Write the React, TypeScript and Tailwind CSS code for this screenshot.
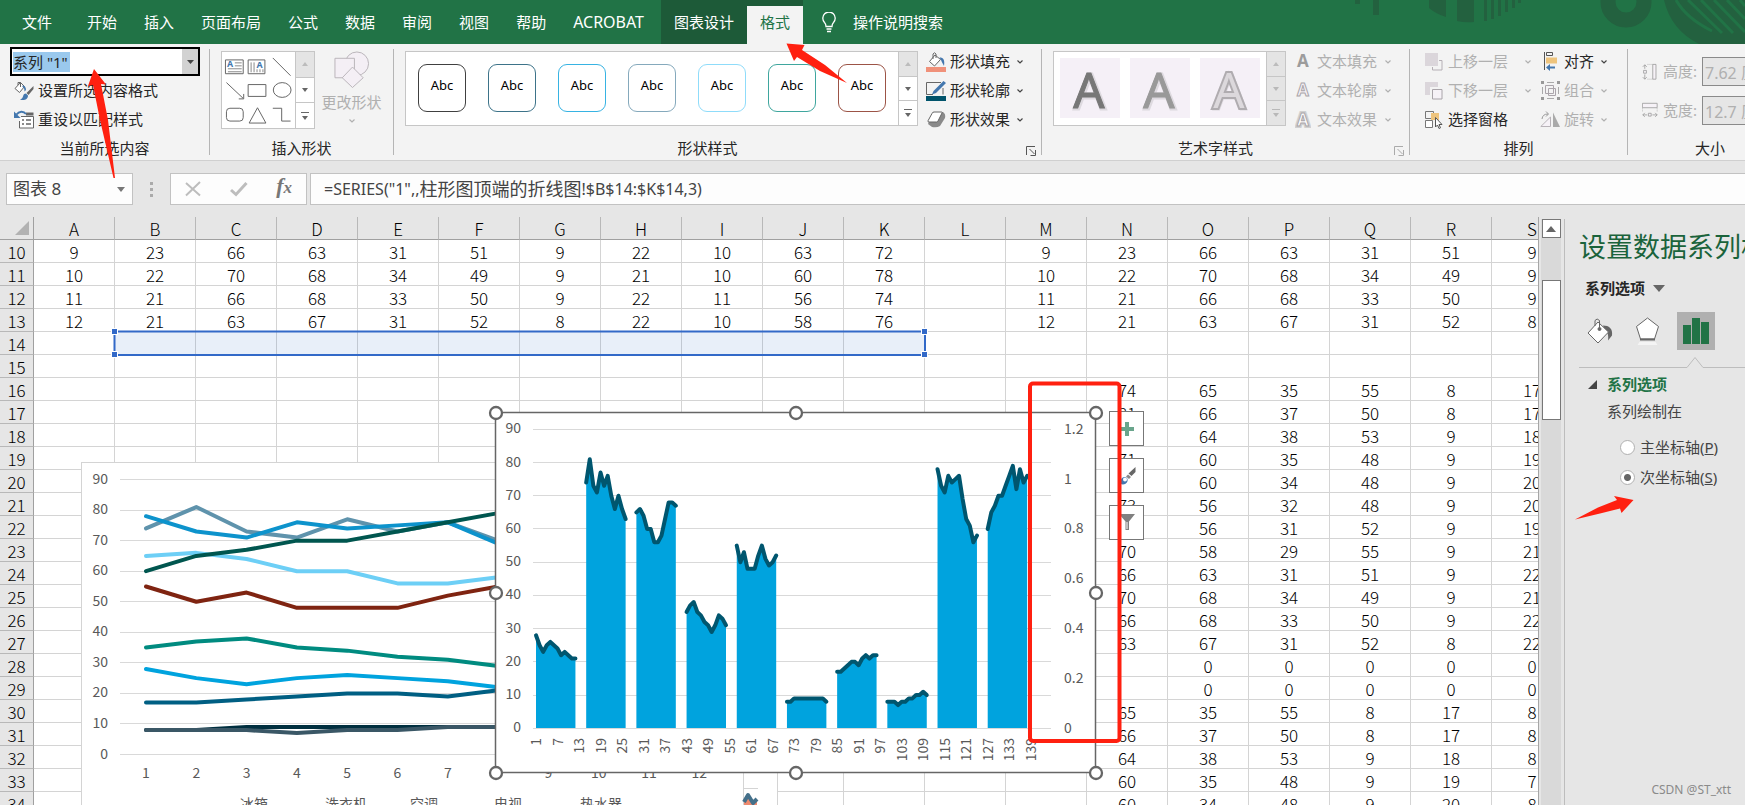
import * as React from "react";

/* ================= UTIL ================= */
function cn(...classes: Array<string | false | null | undefined>) {
  return classes.filter(Boolean).join(" ");
}

/* ================= TOKENS UI ================= */
const UI_FONT = "font-['Noto_Sans','Noto_Sans_CJK_SC',sans-serif]";
const CELL_FONT = "font-['Noto_Sans_CJK_SC',sans-serif]";
const CHART_FONT = "'Noto Sans CJK SC', sans-serif";
const RED = "#ff2010";

/* ================= DATA ================= */
const TABS = ["文件", "开始", "插入", "页面布局", "公式", "数据", "审阅", "视图", "帮助", "ACROBAT"];
const COLS = "ABCDEFGHIJKLMNOPQRS".split("");

const ROWS: Record<number, string> = {
  10: "9,23,66,63,31,51,9,22,10,63,72,,9,23,66,63,31,51,9",
  11: "10,22,70,68,34,49,9,21,10,60,78,,10,22,70,68,34,49,9",
  12: "11,21,66,68,33,50,9,22,11,56,74,,11,21,66,68,33,50,9",
  13: "12,21,63,67,31,52,8,22,10,58,76,,12,21,63,67,31,52,8",
};

// columns N to S, rows 16 to 34
const RIGHT_BLOCK = [
  "74,65,35,55,8,17",
  "81,66,37,50,8,17",
  "73,64,38,53,9,18",
  "71,60,35,48,9,19",
  "77,60,34,48,9,20",
  "73,56,32,48,9,20",
  "76,56,31,52,9,19",
  "70,58,29,55,9,21",
  "66,63,31,51,9,22",
  "70,68,34,49,9,21",
  "66,68,33,50,9,22",
  "63,67,31,52,8,22",
  ",0,0,0,0,0",
  ",0,0,0,0,0",
  "65,35,55,8,17,8",
  "66,37,50,8,17,8",
  "64,38,53,9,18,8",
  "60,35,48,9,19,7",
  "60,34,48,9,20,8",
];

RIGHT_BLOCK.forEach((line, i) => {
  ROWS[16 + i] = ",".repeat(13) + line;
});

const ROW_NUMBERS = Array.from({ length: 25 }, (_, i) => i + 10);

const SERIES = [
  [28, 25, 23, 25, 26, 25, 24, 22, 23, 22, 21, 21],
  [74, 81, 73, 71, 77, 73, 76, 70, 66, 70, 66, 63],
  [65, 66, 64, 60, 60, 56, 56, 58, 63, 68, 68, 67],
  [35, 37, 38, 35, 34, 32, 31, 29, 31, 34, 33, 31],
  [55, 50, 53, 48, 48, 48, 52, 55, 51, 49, 50, 52],
  [8, 8, 9, 9, 9, 9, 9, 9, 9, 9, 9, 8],
  [17, 17, 18, 19, 20, 20, 19, 21, 22, 21, 22, 22],
  [8, 8, 8, 7, 8, 8, 9, 9, 10, 10, 11, 10],
  [78, 73, 71, 76, 74, 75, 76, 69, 63, 61, 56, 58],
  [60, 65, 67, 70, 70, 73, 76, 79, 72, 78, 74, 76],
];

const LINE_COLORS = [
  "#00a3de", "#5f93ac", "#6dcff6", "#008b80", "#7f2411",
  "#002f3f", "#005f83", "#3a5766", "#0d93cc", "#00564f",
];

const SHAPE_STYLES = [
  "border-[#404040]", "border-[#3d7389]", "border-[#37b3e3]", "border-[#85a9bc]",
  "border-[#8fdcfa]", "border-[#3fa69e]", "border-[#9c5446]",
];

/* ================= SMALL PARTS ================= */
function Chevron({ dim }: { dim?: boolean }) {
  return (
    <svg width="8" height="6" viewBox="0 0 8 6" fill="none" stroke={dim ? "#b0b0b0" : "#444"} strokeWidth="1.2">
      <path d="M1.5 1.5 4 4l2.5-2.5" />
    </svg>
  );
}

function Group({ label, className, launcher, children }: {
  label: string;
  className?: string;
  launcher?: "on" | "off";
  children: React.ReactNode;
}) {
  return (
    <section className={cn("relative flex shrink-0 flex-col", className)}>
      <div className="flex-1">{children}</div>
      <p className={cn("h-6 text-center leading-6", launcher && "pr-5")}>{label}</p>
      {launcher && (
        <button aria-label={label} className="absolute bottom-1 right-1">
          <svg width="11" height="10" viewBox="0 0 11 10" fill="none" stroke={launcher === "on" ? "#555" : "#aaa"}>
            <path d="M.5 9V.5H9M3.500 3l5 5M9.500 4v5.500H4.500" />
          </svg>
        </button>
      )}
    </section>
  );
}

function Separator() {
  return <div className="my-[5px] w-px shrink-0 bg-[#b5b5b5]" />;
}

function GalleryScroll({ dim }: { dim?: boolean }) {
  const on = dim ? "#b8b8b8" : "#666";
  return (
    <div className="flex w-[19px] flex-col border-l border-[#c6c6c6]">
      <button aria-label="向上" className="grid flex-1 place-items-center border-b border-[#c6c6c6] bg-[#e4e4e4]">
        <svg width="6" height="4"><path d="M0 4 3 0l3 4z" fill="#bcbcbc" /></svg>
      </button>
      <button aria-label="向下" className={cn("grid flex-1 place-items-center border-b border-[#c6c6c6]", dim && "bg-[#e4e4e4]")}>
        <svg width="6" height="4"><path d="M0 0h6L3 4z" fill={on} /></svg>
      </button>
      <button aria-label="其他" className={cn("grid flex-1 place-items-center", dim && "bg-[#e4e4e4]")}>
        <svg width="8" height="8"><path d="M0 0h8v1H0zM1 4h6L4 8z" fill={on} /></svg>
      </button>
    </div>
  );
}

function Tool({ icon, label, dim, menu, className }: {
  icon: React.ReactNode;
  label: string;
  dim?: boolean;
  menu?: boolean;
  className?: string;
}) {
  return (
    <button className={cn("flex h-[29px] items-center gap-1 whitespace-nowrap", dim && "text-[#b0b0b0]", className)}>
      <span className="grid w-5 place-items-center">{icon}</span>
      <span>{label}</span>
      {menu && <span className="ml-auto"><Chevron dim={dim} /></span>}
    </button>
  );
}

/* ================= ICONS ================= */
const FormatIcon = () => (
  <svg width="20" height="20" viewBox="0 0 20 20" fill="none">
    <path d="M6.500 1.500 1 7.500l4.500 4 5-6z" fill="#fff" stroke="#666" />
    <path d="M4 4V1.500h2.500V6" stroke="#666" />
    <path d="M8.500 4.500c2 0 3.500 1.500 3.500 4.500l-1.500 1.500C10.500 8 10 6.500 8.500 6z" fill="#4377ae" />
    <path d="m19.500 5-7 7 2 2 5-6z" fill="#666" />
    <path d="M12 12.500c-2 0-2.500 1-3 3-.4 1.500-1.500 2.500-3 3 3.500 1.300 8 .5 8-4z" fill="#4377ae" />
  </svg>
);

const ResetIcon = () => (
  <svg width="20" height="19" viewBox="0 0 20 19" fill="none">
    <path d="M7 6.500h12.500v11.500h-14v-7" fill="#fff" stroke="#666" />
    <path d="M12 2.500h7.500v3H12z" fill="#666" />
    <path d="M8 10h2M8 14h2M12 10h5M12 14h5" stroke="#666" strokeWidth="1.500" />
    <path d="M12 4C9.500.8 5 1 2.500 4.500" stroke="#4377ae" strokeWidth="2" />
    <path d="M0 1.500V8h6.500z" fill="#4377ae" />
  </svg>
);

const ShapeFillIcon = () => (
  <svg width="20" height="20" viewBox="0 0 20 20" fill="none">
    <path d="M9 3 3.500 9.500l5 4.500 6-6.500z" fill="#fff" stroke="#666" />
    <path d="M7 7V2q1.500-2.500 3 0v4" stroke="#666" />
    <path d="M13.500 5.500c4 0 5.500 2.500 4.500 8.500-1-2-2-3.500-3-6z" fill="#4377ae" />
    <path d="M0 15h20v5H0z" fill="#f0917a" />
  </svg>
);

const ShapeOutlineIcon = () => (
  <svg width="20" height="20" viewBox="0 0 20 20" fill="none">
    <path d="M15 1.500H.5v12H7M17 7v6.500" stroke="#666" />
    <path d="M17.500 0 20 2 10 12l-4 1.500L7.500 10z" fill="#4377ae" />
    <path d="M0 15h20v5H0z" fill="#00536b" />
  </svg>
);

const ShapeEffectIcon = () => (
  <svg width="19" height="17" viewBox="0 0 19 17">
    <path d="M6 1h10q3 2 2 6l-5 8q-3 2-8 1l-4-3z" fill="#8a8a8a" />
    <path d="M7 1h7.500q1 0 .5 1l-4 8q-.5 1-1.500 1H2q-1.500 0-1-1.200l4-7.300Q5.500 1 7 1z" fill="#fff" stroke="#666" />
  </svg>
);

function LetterIcon({ kind }: { kind: "fill" | "outline" | "glow" }) {
  return (
    <svg width="16" height="18" viewBox="0 0 16 18" fontFamily="'Noto Sans', sans-serif" fontWeight="bold" fontSize="17">
      {kind === "fill" && <text x="8" y="14" textAnchor="middle" fill="#9c9c9c">A</text>}
      {kind === "outline" && <text x="8" y="14" textAnchor="middle" fill="#f6f2f7" stroke="#aaa6aa">A</text>}
      {kind === "glow" && (
        <>
          <text x="8" y="15" textAnchor="middle" fill="none" stroke="#d0d0d0" strokeWidth="4">A</text>
          <text x="8" y="15" textAnchor="middle" fill="#fff" stroke="#aaa6aa">A</text>
        </>
      )}
    </svg>
  );
}

const ForwardIcon = () => (
  <svg width="18" height="18" viewBox="0 0 18 18" fill="none" stroke="#b5afb5">
    <path d="M0 0h13v13H0z" fill="#dbd6db" stroke="none" />
    <path d="M14 7.500h3v9.500H7.500V14" />
  </svg>
);

const BackwardIcon = () => (
  <svg width="18" height="18" viewBox="0 0 18 18" fill="none">
    <path d="M0 0h13v13H0z" fill="#dbd6db" />
    <path d="M6.500 6.500h11v11h-11z" fill="#f6f2f7" stroke="#f3f3f3" strokeWidth="3" />
    <path d="M7.500 7.500h9.500v9.500H7.500z" fill="#f6f2f7" stroke="#a9a4a9" />
  </svg>
);

const PaneIcon = () => (
  <svg width="18" height="18" viewBox="0 0 18 18" fill="none">
    <path d="M.5.5h8v7h-8z" stroke="#777" />
    <path d="M6 2h8v7H6z" fill="#eec47d" />
    <path d="M.5 9.500h7v7h-7z" fill="#fff" stroke="#777" />
    <path d="M10.500 6.500v9.500l2-2 1.500 3.500 1.500-.7-1.500-3.300h3z" fill="#fff" stroke="#555" />
  </svg>
);

const AlignIcon = () => (
  <svg width="18" height="19" viewBox="0 0 18 19" fill="none">
    <path d="M3.500 0v18M5.500.5h6v3h-6z" stroke="#555" />
    <path d="M5 5.500h11v6H5z" fill="#eec47d" />
    <path d="M5 15.500 9 12v2.500h5v2H9V19z" fill="#4377ae" />
  </svg>
);

const CombineIcon = () => (
  <svg width="19" height="19" viewBox="0 0 19 19" fill="none" stroke="#aaa">
    <path d="M6 1.500h7M6 17.500h7M1.500 6v7M17.500 6v7" />
    <path d="M4.500 4.500h8v8h-8zM7.500 7.500h7v7h-7z" stroke="#aaa4aa" />
    <path d="M0 0h3v3H0zM16 0h3v3h-3zM0 16h3v3H0zM16 16h3v3h-3z" fill="#999" stroke="none" />
  </svg>
);

const RotateIcon = () => (
  <svg width="20" height="17" viewBox="0 0 20 17" fill="none" stroke="#b8b3b8">
    <path d="M.8 15.500H10.500V6z" fill="#f6f2f7" />
    <path d="M13 1.500v14.500h7z" fill="#aaa" stroke="none" />
    <path d="M2 8q.5-5 6-5M6 .5 8.500 3 6 5.500" stroke="#999" />
  </svg>
);

const HeightIcon = () => (
  <svg width="20" height="20" viewBox="0 0 20 20" fill="none" stroke="#999">
    <path d="M3.500 6V1M1 3.500 3.500 1 6 3.500M3.500 13v6M1 16.500 3.500 19 6 16.500" />
    <path d="M2 8h3.500v3.500H2zM13.500.5h4v18.500h-4z" fill="#f6f2f7" />
    <path d="M7 .5h6M7 19h6" strokeDasharray="1 1.500" />
  </svg>
);

const WidthIcon = () => (
  <svg width="20" height="19" viewBox="0 0 20 19" fill="none" stroke="#999">
    <path d="M.5.5h18.500v5.500H.5zM8 13h3.500v3.500H8z" fill="#f6f2f7" />
    <path d="M6.500 15H1M3.500 12.500 1 15l2.500 2.500M13 15h6M16.500 12.500 19 15l-2.500 2.500" />
    <path d="M.5 7v5M19 7v5" strokeDasharray="1 1.500" />
  </svg>
);

/* ================= TITLE BAR ================= */
function TabBar() {
  return (
    <nav className="relative flex h-11 shrink-0 items-stretch overflow-hidden bg-[#217346] text-[15px] text-white">
      <svg className="absolute right-0 top-0" width="475" height="44" viewBox="1270 0 475 44" fill="#23613f">
        <path d="M1355 0h5v4h-5zM1373 0h6v15h-6zM1429 0h17v17q-10-3-17-9zM1457 0h17v22q-9 1-17-1zM1484 0h3v21h-3zM1491 0h3v19h-3zM1498 0h3v16h-3zM1505 0h3v12h-3zM1512 0h3v8h-3zM1518 0h3v3h-3z" />
        <circle cx="1626" cy="2" r="18" fill="none" stroke="#23613f" strokeWidth="15" />
        <path d="M1664 0h81v44h-46q-28-14-35-44z" />
        <g stroke="#217346" strokeWidth="3">
          <path d="M1676 0q10 18 36 31M1688 0l34 33M1701 0l32 33M1714 0l31 32M1727 0l18 19M1740 0l5 6" fill="none" />
        </g>
      </svg>
      <div className="flex gap-px pl-[9px]">
        {TABS.map((t) => (
          <button key={t} className={cn("whitespace-nowrap px-[13px] first:mr-2", t === "ACROBAT" && "text-[16px]")}>{t}</button>
        ))}
      </div>
      <div className="ml-1 flex border-t-[6px] border-[#1d5a38] bg-[#1d5a38]">
        <button className="px-[13px] pb-[6px]">图表设计</button>
        <button className="bg-[#f3f3f3] px-[13px] pb-[6px] text-[#217346]">格式</button>
      </div>
      <button className="ml-[19px] flex items-center gap-[17px]">
        <svg width="14" height="21" viewBox="0 0 14 21" fill="none" stroke="#fff" strokeWidth="1.300">
          <path d="M4 14.500Q4 12 2.500 10.500A6.200 6.200 0 1 1 11.500 10.500Q10 12 10 14.500zM4.500 17h5M5 19.500h4" />
        </svg>
        操作说明搜索
      </button>
    </nav>
  );
}

/* ================= RIBBON ================= */
function Ribbon() {
  return (
    <div className="flex h-[117px] shrink-0 overflow-hidden border-b border-[#d0d0d0] bg-[#f3f3f3] text-[15px] text-[#262626]">
      <Group label="当前所选内容" className="w-[209px]">
        <div className="px-[10px] pt-[3px]">
          <div className="flex h-[29px] w-[190px] items-center border-2 border-black bg-white pl-px">
            <input aria-label="图表元素" defaultValue={'系列 "1"'} className="w-[57px] bg-[#9ac9ed] leading-5 outline-none" />
            <button aria-label="展开" className="ml-auto grid h-full w-4 place-items-center bg-[#d2d2d2]">
              <svg width="7" height="4"><path d="M0 0h7L3.500 4z" fill="#444" /></svg>
            </button>
          </div>
          <Tool icon={<FormatIcon />} label="设置所选内容格式" className="pl-1" />
          <Tool icon={<ResetIcon />} label="重设以匹配样式" className="pl-1" />
        </div>
      </Group>
      <Separator />

      <Group label="插入形状" className="w-[183px]">
        <div className="flex items-start pl-[11px] pt-[7px]">
          <div className="flex h-[78px] w-[94px] border border-[#c6c6c6] bg-white">
            <svg className="flex-1" width="74" height="76" viewBox="0 0 74 76" fill="none" stroke="#666">
              <path d="M3.500 7.500h18v14h-18zM26.500 7.500h17v14h-17z" />
              <path d="M13 10.500h7M13 13.500h7M6 16.500h14M6 19.500h14M29.500 10v10M32.500 10v10M35.500 17v3M38.500 17v3M41.500 17v3" stroke="#888" />
              <g fill="#4377ae" stroke="none" fontFamily="'Noto Sans', sans-serif" fontWeight="bold" fontSize="9">
                <text x="5" y="15">A</text>
                <text x="35" y="16">A</text>
              </g>
              <path d="m51.500 5.500 18 18M4.500 30.500l17 16M17 47h5v-5M26.500 32.500h18v12h-18z" />
              <ellipse cx="61" cy="38" rx="9" ry="7.500" />
              <rect x="4.500" y="56.500" width="17" height="13" rx="3.500" />
              <path d="m36 56 8.500 15.500H27.500zM51.500 56.500h9v13h9" />
            </svg>
            <GalleryScroll />
          </div>
          <button className="flex flex-1 flex-col items-center whitespace-nowrap pr-[5px] text-[#b0b0b0]">
            <svg width="38" height="37" viewBox="0 0 38 38" fill="#f4eff5" stroke="#b9b4b9">
              <circle cx="24" cy="13" r="12" />
              <path d="M1.500 7.500h20v20h-20z" />
              <path d="m19.500 16.500 11 11-11 10-10.500-10z" />
            </svg>
            <span className="mb-1 mt-[2px] leading-6">更改形状</span>
            <Chevron dim />
          </button>
        </div>
      </Group>
      <Separator />

      <Group label="形状样式" launcher="on" className="w-[647px]">
        <div className="flex pl-[11px]">
          <div className="mt-[7px] flex h-[75px] border border-[#c6c6c6] bg-white">
            <div className="flex gap-[22px] px-3 pt-3">
              {SHAPE_STYLES.map((s) => (
                <button
                  key={s}
                  className={cn("h-12 w-12 rounded-[9px] border pb-[4px] text-[13px] text-black", s)}
                >
                  Abc
                </button>
              ))}
            </div>
            <GalleryScroll />
          </div>
          <div className="flex w-[106px] flex-col pl-[8px] pt-[3px]">
            <Tool icon={<ShapeFillIcon />} label="形状填充" menu />
            <Tool icon={<ShapeOutlineIcon />} label="形状轮廓" menu />
            <Tool icon={<ShapeEffectIcon />} label="形状效果" menu />
          </div>
        </div>
      </Group>
      <Separator />

      <Group label="艺术字样式" launcher="off" className="w-[367px]">
        <div className="flex pl-[11px]">
          <div className="mt-[7px] flex h-[75px] border border-[#c6c6c6] bg-white">
            <div className="flex gap-[10px] px-[6px] pt-[6px]">
              {["#777777", "#999999", "#dcd8dc"].map((fill, i) => (
                <button key={fill} aria-label="艺术字" className="h-[60px] w-[60px] bg-[#f5f0f7]">
                  <svg width="60" height="60" viewBox="0 0 60 60" fontFamily="'Noto Sans', sans-serif" fontSize="49" textAnchor="middle">
                    <text x="30" y="51" fill="none" stroke="#dedae0" strokeWidth="3">A</text>
                    <text x="29" y="50" fill={fill} stroke={i === 2 ? "#b0acb0" : fill} strokeWidth={i === 2 ? 4 : 1} paintOrder="stroke">A</text>
                  </svg>
                </button>
              ))}
            </div>
            <GalleryScroll dim />
          </div>
          <div className="flex w-[106px] flex-col pl-[7px] pt-[3px]">
            <Tool icon={<LetterIcon kind="fill" />} label="文本填充" dim menu />
            <Tool icon={<LetterIcon kind="outline" />} label="文本轮廓" dim menu />
            <Tool icon={<LetterIcon kind="glow" />} label="文本效果" dim menu />
          </div>
        </div>
      </Group>
      <Separator />

      <Group label="排列" className="w-[217px]">
        <div className="flex gap-[8px] pl-[14px] pt-[3px]">
          <div className="flex w-[108px] flex-col">
            <Tool icon={<ForwardIcon />} label="上移一层" dim menu />
            <Tool icon={<BackwardIcon />} label="下移一层" dim menu />
            <Tool icon={<PaneIcon />} label="选择窗格" />
          </div>
          <div className="flex w-[68px] flex-col">
            <Tool icon={<AlignIcon />} label="对齐" menu />
            <Tool icon={<CombineIcon />} label="组合" dim menu />
            <Tool icon={<RotateIcon />} label="旋转" dim menu />
          </div>
        </div>
      </Group>
      <Separator />

      <Group label="大小" className="w-[164px]">
        <div className="flex flex-col gap-[10px] pl-[14px] pt-[13px] text-[#b0b0b0]">
          <label className="flex h-[29px] items-center gap-[5px]">
            <HeightIcon />
            <span className="w-9 whitespace-nowrap">高度:</span>
            <input disabled defaultValue="7.62 厘米" className="h-full w-[90px] border border-[#8a8a8a] bg-[#e6e6e6] px-[2px] text-[16px]" />
          </label>
          <label className="flex h-[29px] items-center gap-[5px]">
            <WidthIcon />
            <span className="w-9 whitespace-nowrap">宽度:</span>
            <input disabled defaultValue="12.7 厘米" className="h-full w-[90px] border border-[#8a8a8a] bg-[#e6e6e6] px-[2px] text-[16px]" />
          </label>
        </div>
      </Group>
    </div>
  );
}

/* ================= FORMULA BAR ================= */
function FormulaBar() {
  return (
    <div className="flex shrink-0 py-3 pl-[6px] text-[#444]">
      <div className="flex h-8 w-[127px] items-center border border-[#c2c2c2] bg-[#fdfdfd] pr-[7px]">
        <input aria-label="名称框" defaultValue="图表 8" className="min-w-0 flex-1 pl-[6px] text-[17px] outline-none" />
        <svg width="8" height="5"><path d="M0 0h8L4 5z" fill="#777" /></svg>
      </div>
      <div className="flex w-[37px] flex-col items-center justify-center gap-[3px]">
        <i className="h-[3px] w-[3px] bg-[#aaa]" />
        <i className="h-[3px] w-[3px] bg-[#aaa]" />
        <i className="h-[3px] w-[3px] bg-[#aaa]" />
      </div>
      <div className="flex h-8 w-[137px] items-center justify-between border border-[#c2c2c2] bg-[#fdfdfd] px-[14px]">
        <button aria-label="取消">
          <svg width="16" height="16" viewBox="0 0 16 16" stroke="#bdbdbd" strokeWidth="2"><path d="M1 2l14 12.500M15 1 1 14.500" /></svg>
        </button>
        <button aria-label="输入">
          <svg width="18" height="16" viewBox="0 0 18 16" fill="none" stroke="#bdbdbd" strokeWidth="3"><path d="m1 9 5 4.500L16.500 2" /></svg>
        </button>
        <button className="pb-1 font-['Liberation_Serif',serif] text-[22px] font-bold italic leading-7 text-[#777]">
          f<span className="text-[17px]">x</span>
        </button>
      </div>
      <div className="ml-[3px] flex h-8 min-w-0 flex-1 items-center overflow-hidden whitespace-pre border border-r-0 border-[#c2c2c2] bg-[#fdfdfd] pl-[13px] text-[16px]">
        =SERIES("1",,<span className="text-[18px]">柱形图顶端的折线图</span>!$B$14:$K$14,3)
      </div>
    </div>
  );
}

/* ================= CHARTS ================= */
function LineChart() {
  const y = (v: number) => 754.5 - v * 3.055;
  const x = (i: number) => 146 + i * 50.3;
  const legend: Array<[string, number]> = [["冰箱", 240], ["洗衣机", 325], ["空调", 410], ["电视", 494], ["热水器", 580]];
  return (
    <g>
      <rect x="81.500" y="462.500" width="696" height="400" fill="#fff" stroke="#d4d4d4" />
      {[0, 10, 20, 30, 40, 50, 60, 70, 80, 90].map((v) => (
        <g key={v}>
          <path d={`M120 ${Math.floor(y(v)) + 0.5}H740`} stroke="#d9d9d9" />
          <text x="108" y={y(v) + 4} textAnchor="end">{v}</text>
        </g>
      ))}
      {SERIES.map((s, n) => (
        <polyline
          key={n}
          points={s.slice(0, 9).map((v, i) => `${x(i)},${y(v)}`).join(" ")}
          fill="none"
          stroke={LINE_COLORS[n]}
          strokeWidth="4"
          strokeLinecap="round"
          strokeLinejoin="round"
        />
      ))}
      {SERIES[0].map((_, i) => (
        <text key={i} x={x(i)} y="778" textAnchor="middle">{i + 1}</text>
      ))}
      {legend.map(([name, lx]) => (
        <text key={name} x={lx} y="809">{name}</text>
      ))}
      <path d="M743.500 770v40M744 788.500h14" stroke="#d4d4d4" />
      <path d="M744 805v-6l4-4 5 9 4-3v4z" fill="#ee8a6f" />
      <path d="m744 802 4-7 5 8 4-4" fill="none" stroke="#44708a" strokeWidth="4" strokeLinejoin="round" />
    </g>
  );
}

function AreaChart() {
  const y = (v: number) => 728.3 - v * 3.322;
  const x = (cat: number) => 536 + (cat - 1) * 3.585;
  const ticks = Array.from({ length: 24 }, (_, i) => 1 + i * 6);
  const handles = [[496, 413], [796, 413], [1096, 413], [496, 593], [1096, 593], [496, 773], [796, 773], [1096, 773]];
  return (
    <g>
      <rect x="495.500" y="412.500" width="600" height="360" fill="#fff" stroke="#666" strokeWidth="1.500" />
      {[0, 10, 20, 30, 40, 50, 60, 70, 80, 90].map((v) => (
        <g key={v}>
          <path d={`M533 ${Math.floor(y(v)) + 0.5}H1051`} stroke="#d9d9d9" />
          <text x="521" y={y(v) + 4} textAnchor="end">{v}</text>
        </g>
      ))}
      {SERIES.map((s, n) => {
        const start = 1 + n * 14;
        const pts = s.map((v, i) => `${x(start + i)},${y(v)}`).join(" ");
        return (
          <g key={n}>
            <polygon points={`${x(start)},728 ${pts} ${x(start + 11)},728`} fill="#00a3de" />
            <polyline points={pts} fill="none" stroke="#00566f" strokeWidth="4" strokeLinecap="round" strokeLinejoin="round" />
          </g>
        );
      })}
      {ticks.map((t) => (
        <text key={t} textAnchor="end" transform={`translate(${x(t) + 5} 738) rotate(-90)`}>{t}</text>
      ))}
      {["0", "0.2", "0.4", "0.6", "0.8", "1", "1.2"].map((t, i) => (
        <text key={t} x="1064" y={732.5 - i * 49.8}>{t}</text>
      ))}
      {handles.map(([cx, cy]) => (
        <circle key={`${cx}-${cy}`} cx={cx} cy={cy} r="6" fill="#fff" stroke="#666" strokeWidth="2.300" />
      ))}
    </g>
  );
}

function ChartButton({ label, className, children }: { label: string; className: string; children: React.ReactNode }) {
  return (
    <button
      aria-label={label}
      className={cn("absolute left-[1109px] grid h-[35px] w-[35px] place-items-center border border-[#777] bg-white", className)}
    >
      {children}
    </button>
  );
}

/* ================= SHEET ================= */
function Sheet() {
  return (
    <div className="relative min-w-0 flex-1 overflow-hidden border-r border-[#a6a6a6]">
      <table className={cn("w-[1573px] table-fixed border-separate border-spacing-0 text-center text-[17px] leading-5 text-black", CELL_FONT)}>
        <colgroup>
          <col className="w-[34px]" />
        </colgroup>
        <thead>
          <tr className="h-[23px] bg-[#e6e6e6]">
            <th className="border-b border-r border-[#a0a0a0] p-0">
              <svg className="ml-auto mr-[4px]" width="14" height="14"><path d="M14 0v14H0z" fill="#b2b2b2" /></svg>
            </th>
            {COLS.map((c) => (
              <th key={c} className="h-[23px] border-b border-r border-b-[#a0a0a0] border-r-[#b8b8b8] p-0 pt-[2px] font-light">{c}</th>
            ))}
          </tr>
        </thead>
        <tbody className="bg-white">
          {ROW_NUMBERS.map((r) => {
            const cells = (ROWS[r] ?? "").split(",");
            return (
              <tr key={r}>
                <th className="h-[23px] border-b border-r border-b-[#b8b8b8] border-r-[#a0a0a0] bg-[#e6e6e6] p-0 pt-[2px] font-light">{r}</th>
                {COLS.map((c, i) => (
                  <td key={c} className="h-[23px] border-b border-r border-[#d4d4d4] p-0 pt-[2px] font-light">{cells[i]}</td>
                ))}
              </tr>
            );
          })}
        </tbody>
      </table>

      {/* selected range and floating charts */}
      <svg
        className="absolute left-0 top-0"
        width="1538"
        height="588"
        viewBox="0 217 1538 588"
        fontFamily={CHART_FONT}
        fontSize="14"
        fill="#595959"
      >
        <rect x="114.500" y="331.500" width="810.500" height="23.500" fill="#3269c8" fillOpacity=".11" stroke="#3269c8" strokeWidth="2" />
        {[[114.5, 331.5], [924.5, 331.5], [114.5, 354.5], [924.5, 354.5]].map(([hx, hy]) => (
          <rect key={`${hx}-${hy}`} x={hx - 3} y={hy - 3} width="6" height="6" fill="#3269c8" stroke="#fff" />
        ))}
        <LineChart />
        <AreaChart />
      </svg>

      <ChartButton label="图表元素" className="top-[194px]">
        <svg width="14" height="14"><path d="M5 0h4v5h5v4H9v5H5V9H0V5h5z" fill="#6aa58c" /></svg>
      </ChartButton>
      <ChartButton label="图表样式" className="top-[241px]">
        <svg width="18" height="18" viewBox="0 0 18 18">
          <path d="M17.500 0v5l-4 4-3-2.500z" fill="#666" />
          <path d="m10 7.500 3 2.500-2 2-3-2.500z" fill="#888" />
          <path d="M9 11c2 3-1 6.500-4 6.500-2 0-4-1-5-2.500 2 0 2.500-1 3-2.500.7-2 4-3.500 6-1.500z" fill="#4377ae" />
          <circle cx="7" cy="12.500" r="2" fill="#fff" />
        </svg>
      </ChartButton>
      <ChartButton label="图表筛选器" className="top-[288px]">
        <svg width="16" height="17" viewBox="0 0 16 17"><path d="M0 0h16l-6 7.500V16H6.500V7.500z" fill="#808080" /><path d="M8 8v7" stroke="#fff" /></svg>
      </ChartButton>
    </div>
  );
}

function ScrollBar() {
  return (
    <div className="flex w-[25px] shrink-0 pl-[2px]">
      <div className="mt-[2px] flex w-5 flex-col items-center bg-[#d9d9d9]">
        <button aria-label="向上滚动" className="grid h-[19px] w-[19px] shrink-0 place-items-center border border-[#777] bg-white">
          <svg width="10" height="6"><path d="M0 6 5 0l5 6z" fill="#666" /></svg>
        </button>
        <div className="mt-[42px] h-[140px] w-[19px] shrink-0 border border-[#777] bg-white" />
      </div>
    </div>
  );
}

/* ================= FORMAT PANE ================= */
function FormatPane() {
  const [axis, setAxis] = React.useState("S");
  return (
    <aside className="mt-[2px] flex w-[181px] shrink-0 flex-col overflow-hidden whitespace-nowrap border-l border-[#bdbdbd] text-[15px] text-[#444]">
      <h2 className="mt-[10px] pl-[14px] text-[27px] leading-9 text-[#1a633b]">设置数据系列格式</h2>
      <button className="mt-[11px] flex items-center gap-2 pl-5 font-bold leading-6 text-[#262626]">
        系列选项
        <svg width="12" height="7"><path d="M0 0h12L6 7z" fill="#666" /></svg>
      </button>
      <div className="mt-3 flex items-center pl-[22px]">
        <button aria-label="填充与线条">
          <svg width="27" height="26" viewBox="0 0 27 26" fill="none" stroke="#666">
            <path d="M16 7.500c6 0 10 3 9 10l-4 5c1-6-1-9-4-12z" fill="#666" stroke="none" />
            <path d="M11 4 1 15l10 10 10.500-11z" fill="#fff" />
            <path d="M8 8V2.500q2-3 4.500 0V10" />
            <circle cx="12.500" cy="11" r="1.500" fill="#666" />
          </svg>
        </button>
        <button aria-label="效果" className="ml-[21px]">
          <svg width="25" height="28" viewBox="0 0 25 28" fill="none" stroke="#666">
            <path d="M12.500 1 1.500 9.500 5.500 22h14l4-12.500z" fill="#fff" />
            <path d="M5 22.500h15" strokeWidth="2" />
            <path d="M4.500 25h16l2 3H2.500z" fill="#f4f4f4" stroke="none" />
          </svg>
        </button>
        <button aria-label="系列选项" className="ml-[17px] grid h-[38px] w-[38px] place-items-center bg-[#b0b0b0]">
          <svg width="26" height="26" fill="#217346"><path d="M0 7h8v19H0zM9 0h8v26H9zM18 4h8v22h-8z" /></svg>
        </button>
      </div>
      <svg className="ml-[14px] mt-[6px] shrink-0" width="167" height="12" viewBox="0 0 167 12" fill="none" stroke="#bdbdbd">
        <path d="M0 11.500h108l8-10 8 10h43" />
      </svg>
      <button className="mt-1 flex items-center gap-[10px] pl-[23px] font-bold leading-6 text-[#217346]">
        <svg width="9" height="9"><path d="M9 0v9H0z" fill="#444" /></svg>
        系列选项
      </button>
      <fieldset className="flex flex-col pl-[42px]">
        <legend className="leading-[30px]">系列绘制在</legend>
        {[["P", "主坐标轴"], ["S", "次坐标轴"]].map(([key, name]) => (
          <label key={key} className="flex h-[30px] items-center gap-[5px] pl-[13px] first-of-type:mt-[6px]">
            <input
              type="radio"
              name="axis"
              checked={axis === key}
              onChange={() => setAxis(key)}
              className="h-[15px] w-[15px] appearance-none rounded-full border border-[#b0b0b0] bg-white checked:bg-[radial-gradient(circle,#666_3px,#fff_4px)]"
            />
            <span>{name}(<u>{key}</u>)</span>
          </label>
        ))}
      </fieldset>
      <p className="mt-auto pb-[6px] pr-[14px] text-right text-[12px] leading-[18px] text-[#8a8a8a]">CSDN @ST_xtt</p>
    </aside>
  );
}

/* ================= PAGE ================= */
export default function App() {
  return (
    <main className={cn("relative flex h-screen flex-col overflow-hidden bg-[#e6e6e6]", UI_FONT)}>
      <TabBar />
      <Ribbon />
      <FormulaBar />
      <div className="flex min-h-0 flex-1">
        <Sheet />
        <ScrollBar />
        <FormatPane />
      </div>

      {/* red marks drawn over the window */}
      <svg className="pointer-events-none absolute left-0 top-0" width="1745" height="805" viewBox="0 0 1745 805" fill={RED}>
        <path d="M94 69 88 86l5-1 7 35 13.500 58h1.500l-7-58-7-36 5 .5z" />
        <path d="m786.500 43.500 18 1.500-2.500 5 23 15 22 18-27-12-23-14-3 4z" />
        <path d="m1633.500 500-19.500-4 3 4-19 7.500-23 12 25-6 20-5 1.500 4.500z" />
        <rect x="1030" y="383.500" width="89.500" height="357.500" rx="3" fill="none" stroke={RED} strokeWidth="4" />
      </svg>
    </main>
  );
}
